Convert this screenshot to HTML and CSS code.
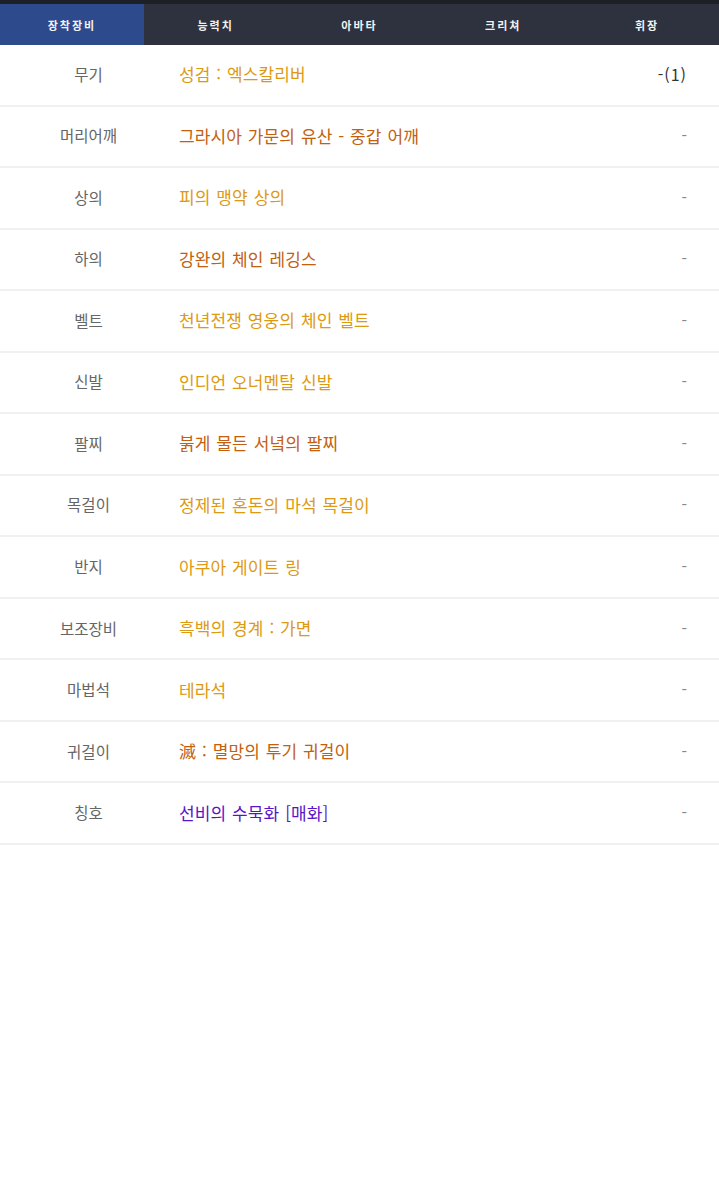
FILE: index.html
```html
<!DOCTYPE html>
<html lang="ko">
<head>
    <meta charset="UTF-8">
    <meta name="viewport" content="width=device-width, initial-scale=1.0">
    <title>장착장비</title>
    <link rel="stylesheet" href="styles.css">
</head>
<body>
    <div class="top-strip"></div>
    <nav class="tabs">
        <a class="tab active" href="#">장착장비</a>
        <a class="tab" href="#">능력치</a>
        <a class="tab" href="#">아바타</a>
        <a class="tab" href="#">크리쳐</a>
        <a class="tab" href="#">휘장</a>
    </nav>

    <ul class="equip-list">
        <li class="equip-row">
            <span class="slot">무기</span>
            <span class="item unique">성검 : 엑스칼리버</span>
            <span class="upgrade dark">-(1)</span>
        </li>
        <li class="equip-row">
            <span class="slot">머리어깨</span>
            <span class="item legendary">그라시아 가문의 유산 - 중갑 어깨</span>
            <span class="upgrade">-</span>
        </li>
        <li class="equip-row">
            <span class="slot">상의</span>
            <span class="item unique">피의 맹약 상의</span>
            <span class="upgrade">-</span>
        </li>
        <li class="equip-row">
            <span class="slot">하의</span>
            <span class="item legendary">강완의 체인 레깅스</span>
            <span class="upgrade">-</span>
        </li>
        <li class="equip-row">
            <span class="slot">벨트</span>
            <span class="item unique">천년전쟁 영웅의 체인 벨트</span>
            <span class="upgrade">-</span>
        </li>
        <li class="equip-row">
            <span class="slot">신발</span>
            <span class="item unique">인디언 오너멘탈 신발</span>
            <span class="upgrade">-</span>
        </li>
        <li class="equip-row">
            <span class="slot">팔찌</span>
            <span class="item legendary">붉게 물든 서녘의 팔찌</span>
            <span class="upgrade">-</span>
        </li>
        <li class="equip-row">
            <span class="slot">목걸이</span>
            <span class="item unique">정제된 혼돈의 마석 목걸이</span>
            <span class="upgrade">-</span>
        </li>
        <li class="equip-row">
            <span class="slot">반지</span>
            <span class="item unique">아쿠아 게이트 링</span>
            <span class="upgrade">-</span>
        </li>
        <li class="equip-row">
            <span class="slot">보조장비</span>
            <span class="item unique">흑백의 경계 : 가면</span>
            <span class="upgrade">-</span>
        </li>
        <li class="equip-row">
            <span class="slot">마법석</span>
            <span class="item unique">테라석</span>
            <span class="upgrade">-</span>
        </li>
        <li class="equip-row">
            <span class="slot">귀걸이</span>
            <span class="item legendary">滅 : 멸망의 투기 귀걸이</span>
            <span class="upgrade">-</span>
        </li>
        <li class="equip-row">
            <span class="slot">칭호</span>
            <span class="item rare">선비의 수묵화 [매화]</span>
            <span class="upgrade">-</span>
        </li>
    </ul>
</body>
</html>
```

FILE: styles.css
```css
:root {
    --nav-bg: #2d323e;
    --nav-active: #2c4a8c;
    --line: #f0f0f0;
    --unique: #dc9a12;
    --legendary: #c2600f;
    --rare: #5a14c8;
}

* {
    margin: 0;
    padding: 0;
    box-sizing: border-box;
}

body {
    background: #ffffff;
    font-family: 'Noto Sans CJK KR', 'Noto Sans', sans-serif;
    color: #333;
}

.top-strip {
    height: 4px;
    background: #1d2026;
}

.tabs {
    display: flex;
    height: 41px;
    background: var(--nav-bg);
}

.tab {
    flex: 1;
    display: flex;
    align-items: center;
    justify-content: center;
    color: #f2f2f2;
    font-size: 11px;
    font-weight: bold;
    letter-spacing: 2px;
    text-decoration: none;
}

.tab.active {
    background: var(--nav-active);
}

.equip-list {
    list-style: none;
}

.equip-row {
    display: flex;
    align-items: center;
    height: 61.54px;
    border-bottom: 2px solid var(--line);
    padding-right: 32px;
    padding-bottom: 2px;
}

.slot {
    width: 179px;
    padding-right: 2px;
    text-align: center;
    font-size: 15.5px;
    color: #666;
}

.item {
    flex: 1;
    font-size: 17px;
    letter-spacing: 0.1px;
    word-spacing: 1px;
}

.item.unique {
    color: var(--unique);
}

.item.legendary {
    color: var(--legendary);
}

.item.rare {
    color: var(--rare);
}

.upgrade {
    font-size: 16px;
    color: #888;
}

.upgrade.dark {
    color: #333;
    letter-spacing: 1px;
}
```
